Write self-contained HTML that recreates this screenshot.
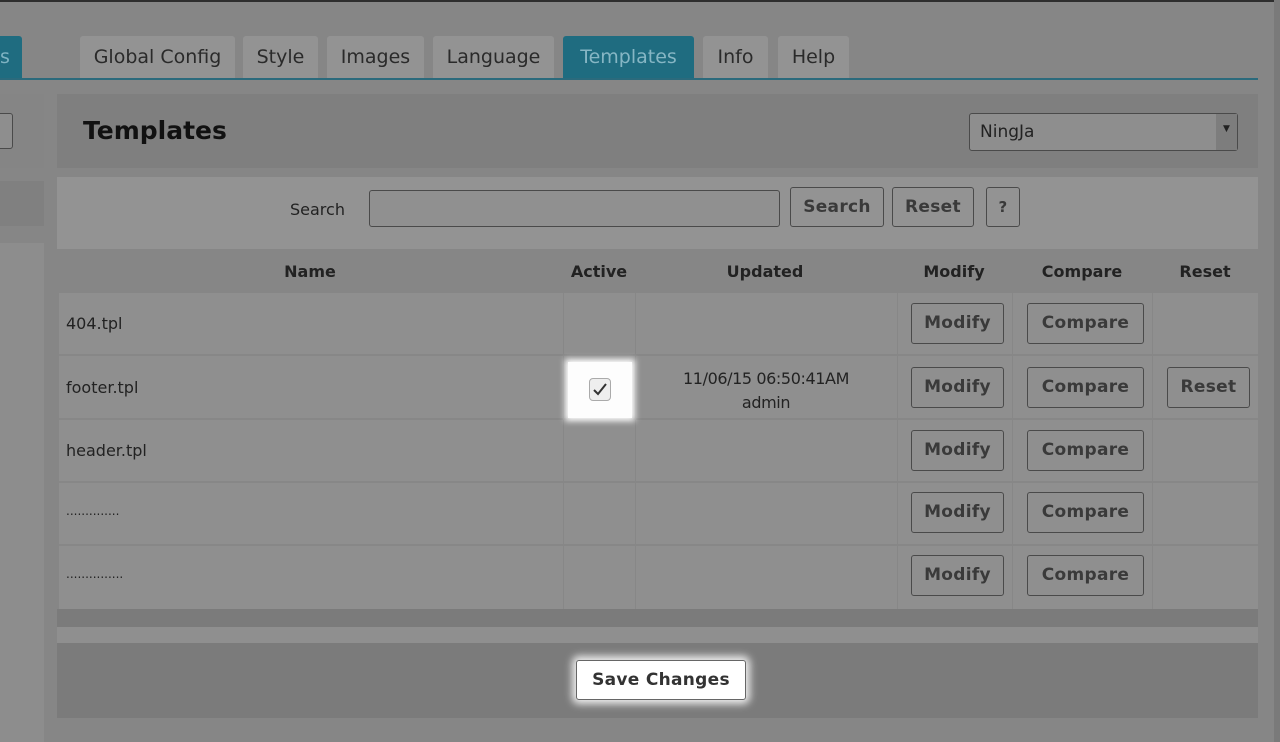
<!DOCTYPE html>
<html><head><meta charset="utf-8"><style>
*{box-sizing:border-box;margin:0;padding:0}
body{width:1280px;height:742px;overflow:hidden;background:#868686;font-family:"DejaVu Sans","Liberation Sans",sans-serif;color:#222;position:relative}
.a{position:absolute}
.tab{position:absolute;top:36px;height:43px;background:#939393;border-radius:3px 3px 0 0;font-size:19px;color:#2a2a2a;text-align:center;line-height:42px}
.btn{position:absolute;border:1px solid #4a4a4a;border-radius:3px;font-weight:bold;font-size:17px;color:#3a3a3a;text-align:center;background:#8f8f8f;letter-spacing:0.3px}
.th{position:absolute;top:262px;font-weight:bold;font-size:16px;color:#222;transform:translateX(-50%)}
.row{position:absolute;left:59px;width:1199px;background:#8f8f8f;border-bottom:2px solid #878787}
.vl{position:absolute;top:293px;height:316px;width:1px;background:#878787}
.nm{position:absolute;left:66px;font-size:16px;color:#222}
</style></head><body>
<div class="a" style="left:0;top:0;width:1280px;height:2px;background:#2e2e2e"></div>
<div class="a" style="left:1274px;top:0;width:6px;height:742px;background:#7a7a7a"></div>
<div class="a" style="left:0;top:36px;width:22px;height:43px;background:#1f6c80;color:#7fb3c2;font-size:19px;line-height:42px;border-radius:0 3px 0 0">s</div>
<div class="tab" style="left:80px;width:155px">Global Config</div>
<div class="tab" style="left:243px;width:75px">Style</div>
<div class="tab" style="left:327px;width:97px">Images</div>
<div class="tab" style="left:433px;width:121px">Language</div>
<div class="tab" style="left:563px;width:131px;background:#1f6c80;color:#86b6c4">Templates</div>
<div class="tab" style="left:703px;width:65px">Info</div>
<div class="tab" style="left:778px;width:71px">Help</div>
<div class="a" style="left:0;top:78px;width:1258px;height:2px;background:#2b6a7c"></div>
<div class="a" style="left:0;top:94px;width:44px;height:74px;background:#858585"></div>
<div class="a" style="left:-5px;top:113px;width:18px;height:36px;border:1px solid #4a4a4a;border-radius:3px;background:#8e8e8e"></div>
<div class="a" style="left:0;top:181px;width:44px;height:45px;background:#808080"></div>
<div class="a" style="left:0;top:243px;width:44px;height:499px;background:#8d8d8d"></div>
<div class="a" style="left:57px;top:94px;width:1201px;height:74px;background:#7f7f7f"></div>
<div class="a" style="left:83px;top:116px;font-size:25px;font-weight:bold;color:#111">Templates</div>
<div class="a" style="left:969px;top:113px;width:269px;height:38px;border:1px solid #4a4a4a;border-radius:3px;background:#8e8e8e;font-size:17px;line-height:36px;padding-left:10px;color:#222">NingJa</div>
<div class="a" style="left:1216px;top:114px;width:21px;height:36px;background:#7d7d7d;text-align:center;font-size:9px;line-height:30px;color:#222">▼</div>
<div class="a" style="left:57px;top:177px;width:1201px;height:72px;background:#939393"></div>
<div class="a" style="left:290px;top:200px;font-size:16px;color:#222">Search</div>
<div class="a" style="left:369px;top:190px;width:411px;height:37px;border:1px solid #4a4a4a;border-radius:3px;background:#909090"></div>
<div class="btn" style="left:790px;top:187px;width:94px;height:40px;line-height:38px;background:#939393">Search</div>
<div class="btn" style="left:892px;top:187px;width:82px;height:40px;line-height:38px;background:#939393">Reset</div>
<div class="btn" style="left:986px;top:187px;width:34px;height:40px;line-height:38px;background:#939393;font-size:15px">?</div>
<div class="th" style="left:310px">Name</div>
<div class="th" style="left:599px">Active</div>
<div class="th" style="left:765px">Updated</div>
<div class="th" style="left:954px">Modify</div>
<div class="th" style="left:1082px">Compare</div>
<div class="th" style="left:1205px">Reset</div>
<div class="row" style="top:293px;height:63px"></div>
<div class="row" style="top:356px;height:64px"></div>
<div class="row" style="top:420px;height:63px"></div>
<div class="row" style="top:483px;height:63px"></div>
<div class="row" style="top:546px;height:63px;border-bottom:none"></div>
<div class="vl" style="left:563px"></div><div class="vl" style="left:635px"></div><div class="vl" style="left:897px"></div><div class="vl" style="left:1012px"></div><div class="vl" style="left:1152px"></div>
<div class="nm" style="top:314px">404.tpl</div>
<div class="nm" style="top:378px">footer.tpl</div>
<div class="nm" style="top:441px">header.tpl</div>
<div class="nm" style="top:504px;font-size:12px">..............</div>
<div class="nm" style="top:567px;font-size:12px">...............</div>
<div class="a" style="left:568px;top:362px;width:64px;height:56px;background:#fdfdfd;box-shadow:0 0 6px 3px #fff"></div>
<div class="a" style="left:589px;top:378px;width:22px;height:23px;border:1px solid #aaa;border-radius:4px;background:#eee"></div>
<svg class="a" style="left:589px;top:378px" width="22" height="23" viewBox="0 0 22 23"><path d="M5 12 L9 16 L17 6" fill="none" stroke="#333" stroke-width="2"/></svg>
<div class="a" style="left:635px;top:367px;width:262px;text-align:center;font-size:16px;line-height:24px;color:#222;letter-spacing:-0.4px">11/06/15 06:50:41AM<br>admin</div>
<div class="btn" style="left:911px;top:303px;width:93px;height:41px;line-height:39px">Modify</div>
<div class="btn" style="left:1027px;top:303px;width:117px;height:41px;line-height:39px">Compare</div>
<div class="btn" style="left:911px;top:367px;width:93px;height:41px;line-height:39px">Modify</div>
<div class="btn" style="left:1027px;top:367px;width:117px;height:41px;line-height:39px">Compare</div>
<div class="btn" style="left:1167px;top:367px;width:83px;height:41px;line-height:39px">Reset</div>
<div class="btn" style="left:911px;top:430px;width:93px;height:41px;line-height:39px">Modify</div>
<div class="btn" style="left:1027px;top:430px;width:117px;height:41px;line-height:39px">Compare</div>
<div class="btn" style="left:911px;top:492px;width:93px;height:41px;line-height:39px">Modify</div>
<div class="btn" style="left:1027px;top:492px;width:117px;height:41px;line-height:39px">Compare</div>
<div class="btn" style="left:911px;top:555px;width:93px;height:41px;line-height:39px">Modify</div>
<div class="btn" style="left:1027px;top:555px;width:117px;height:41px;line-height:39px">Compare</div>
<div class="a" style="left:57px;top:609px;width:1201px;height:18px;background:#7b7b7b"></div>
<div class="a" style="left:57px;top:627px;width:1201px;height:16px;background:#8f8f8f"></div>
<div class="a" style="left:57px;top:643px;width:1201px;height:75px;background:#7b7b7b"></div>
<div class="btn" style="left:576px;top:660px;width:170px;height:40px;line-height:38px;background:#fff;color:#333;border-color:#666;box-shadow:0 0 8px 4px #eee">Save Changes</div>
</body></html>
